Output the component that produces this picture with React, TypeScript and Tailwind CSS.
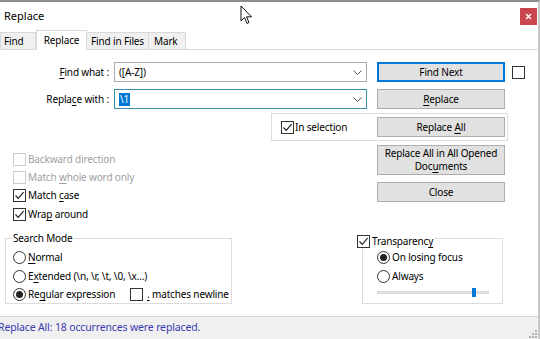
import React from "react";

const font = { fontFamily: '"Noto Sans", "Liberation Sans", sans-serif' };

// label with one access-key letter underlined
const Key = ({ text, at }: { text: string; at: number }) => (
  <span className="whitespace-pre">
    {text.slice(0, at)}
    <span className="underline underline-offset-[2px]">{text.slice(at, at + 1)}</span>
    {text.slice(at + 1)}
  </span>
);

const CheckBox = ({ checked, disabled }: { checked?: boolean; disabled?: boolean }) => (
  <div
    className={`w-[13px] h-[13px] shrink-0 bg-white border ${
      disabled ? "border-[#cccccc]" : "border-[#333333]"
    } flex items-center justify-center`}
  >
    {checked && (
      <svg width="11" height="11" viewBox="0 0 11 11">
        <path d="M1.5 5.5 L4.2 8.3 L9.6 2.2" fill="none" stroke="#222" strokeWidth="1.2" />
      </svg>
    )}
  </div>
);

const Radio = ({ on }: { on?: boolean }) => (
  <div className="w-[13px] h-[13px] shrink-0 rounded-full border border-[#333333] bg-white flex items-center justify-center">
    {on && <div className="w-[7px] h-[7px] rounded-full bg-[#222]" />}
  </div>
);

const Btn = ({
  children,
  h = "h-[20px]",
  active,
}: {
  children: React.ReactNode;
  h?: string;
  active?: boolean;
}) => (
  <div
    className={`w-[128px] ${h} shrink-0 bg-[#e1e1e1] border ${
      active ? "border-[#0078d7] shadow-[inset_0_0_0_1px_#0078d7]" : "border-[#adadad]"
    } flex items-center justify-center text-center leading-[13px] whitespace-nowrap`}
  >
    {children}
  </div>
);

const Combo = ({ children, focused }: { children: React.ReactNode; focused?: boolean }) => (
  <div
    className={`w-[253px] h-[20px] bg-white border ${
      focused ? "border-[#3c8fa6]" : "border-[#a9a9a9]"
    } flex items-center pl-[4px] pr-[4px]`}
  >
    <div className="flex-1 flex items-center">{children}</div>
    <svg width="9" height="5" viewBox="0 0 9 5">
      <path d="M0.5 0.5 L4.5 4.5 L8.5 0.5" fill="none" stroke="#555" strokeWidth="1" />
    </svg>
  </div>
);

export default function App() {
  return (
    <div
      className="relative w-[540px] h-[339px] bg-white border-t-2 border-[#8c8c8c] border-r-2 border-r-[#c8c8c8] text-[10px] tracking-[-0.15px] text-black overflow-hidden flex flex-col whitespace-nowrap"
      style={font}
    >
      {/* title bar */}
      <div className="h-[28px] flex items-center justify-between pl-[4px] pr-[1px]">
        <span className="text-[11px] tracking-normal">Replace</span>
        <div className="w-[17px] h-[17px] bg-[#c9464e] flex items-center justify-center">
          <svg width="7" height="7" viewBox="0 0 7 7">
            <path d="M1 1 L6 6 M6 1 L1 6" stroke="#fff" strokeWidth="1.4" />
          </svg>
        </div>
      </div>

      {/* tabs */}
      <div className="h-[20px] flex items-end border-b border-[#d9d9d9]">
        <div className="h-[17px] w-[36px] pl-[3px] bg-[#f0f0f0] border border-b-0 border-[#d9d9d9] flex items-center">
          Find
        </div>
        <div className="h-[20px] w-[51px] -mb-[1px] bg-white border border-b-0 border-[#d9d9d9] flex items-center justify-center">
          Replace
        </div>
        <div className="h-[17px] w-[62px] bg-[#f0f0f0] border border-l-0 border-b-0 border-[#d9d9d9] flex items-center justify-center">
          Find in Files
        </div>
        <div className="h-[17px] w-[37px] pl-[5px] bg-[#f0f0f0] border border-l-0 border-b-0 border-[#d9d9d9] flex items-center">
          Mark
        </div>
      </div>

      {/* find / replace rows */}
      <div className="mt-[12px] flex items-center h-[20px]">
        <div className="w-[110px] text-right pr-[1px]">
          <Key text="Find what :" at={0} />
        </div>
        <div className="ml-[4px]">
          <Combo>([A-Z])</Combo>
        </div>
        <div className="ml-[10px]">
          <Btn active>Find Next</Btn>
        </div>
        <div className="ml-[7px]">
          <CheckBox />
        </div>
      </div>

      <div className="mt-[7px] flex items-center h-[20px]">
        <div className="w-[110px] text-right pr-[1px]">
          <Key text="Replace with :" at={5} />
        </div>
        <div className="ml-[4px]">
          <Combo focused>
            <span className="bg-[#0078d7] text-white px-[1px] leading-[13px]">\1</span>
          </Combo>
        </div>
        <div className="ml-[10px]">
          <Btn>
            <Key text="Replace" at={0} />
          </Btn>
        </div>
      </div>

      {/* in selection group */}
      <div className="mt-[4px] ml-[271px] w-[237px] h-[28px] border border-[#dcdcdc] flex items-center">
        <div className="ml-[9px] flex items-center gap-[1px] w-[96px]">
          <CheckBox checked />
          <Key text="In selection" at={9} />
        </div>
        <Btn>
          <Key text="Replace All" at={8} />
        </Btn>
      </div>

      {/* options + buttons */}
      <div className="h-[97px] flex">
        <div className="ml-[13px] w-[364px] pt-[12px] flex flex-col gap-[5px]">
          <div className="flex items-center gap-[2px] h-[13px] text-[#a0a0a0]">
            <CheckBox disabled />
            Backward direction
          </div>
          <div className="flex items-center gap-[2px] h-[13px] text-[#a0a0a0]">
            <CheckBox disabled />
            <Key text="Match whole word only" at={6} />
          </div>
          <div className="flex items-center gap-[2px] h-[13px]">
            <CheckBox checked />
            <Key text="Match case" at={6} />
          </div>
          <div className="mt-[1px] flex items-center gap-[2px] h-[13px]">
            <CheckBox checked />
            <Key text="Wrap around" at={3} />
          </div>
        </div>
        <div className="pt-[4px] flex flex-col gap-[7px]">
          <Btn h="h-[30px]">
            <span>
              Replace All in All Opened
              <br />
              Doc<span className="underline underline-offset-[2px]">u</span>ments
            </span>
          </Btn>
          <Btn>Close</Btn>
        </div>
      </div>

      {/* search mode + transparency */}
      <div className="flex">
        <div className="ml-[5px] w-[227px] h-[66px] border border-[#dcdcdc] relative flex flex-col pl-[7px] pt-[12px] gap-[6px]">
          <span className="absolute left-[6px] -top-[8px] bg-white px-[1px] leading-[14px]">Search Mode</span>
          <div className="flex items-center gap-[2px] h-[13px]">
            <Radio />
            <Key text="Normal" at={0} />
          </div>
          <div className="flex items-center gap-[2px] h-[13px]">
            <Radio />
            <Key text="Extended (\n, \r, \t, \0, \x...)" at={1} />
          </div>
          <div className="-mt-[1px] flex items-center gap-[2px] h-[13px]">
            <Radio on />
            <div className="w-[100px]">
              <Key text="Regular expression" at={2} />
            </div>
            <CheckBox />
            <span className="ml-[2px]">
              <Key text=". matches newline" at={0} />
            </span>
          </div>
        </div>

        <div className="ml-[130px] w-[141px] h-[66px] border border-[#dcdcdc] relative flex flex-col pl-[14px] pt-[12px] gap-[6px]">
          <div className="absolute -left-[6px] -top-[5px] bg-white flex items-center gap-[2px] pr-[2px]">
            <CheckBox checked />
            <Key text="Transparency" at={11} />
          </div>
          <div className="flex items-center gap-[2px] h-[13px]">
            <Radio on />
            On losing focus
          </div>
          <div className="flex items-center gap-[2px] h-[13px]">
            <Radio />
            Always
          </div>
          <div className="relative w-[112px] h-[8px] -mt-[1px] flex items-center">
            <div className="w-full h-[3px] bg-[#e7e7e7] border border-[#d6d6d6]" />
            <div className="absolute left-[95px] top-0 w-[4px] h-[9px] bg-[#0078d7]" />
          </div>
        </div>
      </div>

      {/* status bar */}
      <div className="mt-auto h-[23px] bg-[#f0f0f0] border-t border-[#d7d7d7] flex items-center justify-between">
        <span className="-ml-[2px] text-[#3a3ab0] text-[10.5px]">
          Replace All: 18 occurrences were replaced.
        </span>
        <svg width="9" height="9" viewBox="0 0 9 9" className="mr-[1px] self-end mb-[1px]">
          <g fill="#b0b0b0">
            <rect x="7" y="1" width="2" height="2" />
            <rect x="4" y="4" width="2" height="2" />
            <rect x="7" y="4" width="2" height="2" />
            <rect x="1" y="7" width="2" height="2" />
            <rect x="4" y="7" width="2" height="2" />
            <rect x="7" y="7" width="2" height="2" />
          </g>
        </svg>
      </div>

      {/* mouse pointer over the title bar */}
      <svg width="13" height="20" viewBox="0 0 13 20" className="absolute left-[240px] top-[3px]">
        <path
          d="M1 1 L1 16 L4.5 12.5 L7 18.5 L9 17.5 L6.6 11.8 L11.5 11.8 Z"
          fill="#fff"
          stroke="#111"
          strokeWidth="1"
          strokeLinejoin="round"
        />
      </svg>
    </div>
  );
}
